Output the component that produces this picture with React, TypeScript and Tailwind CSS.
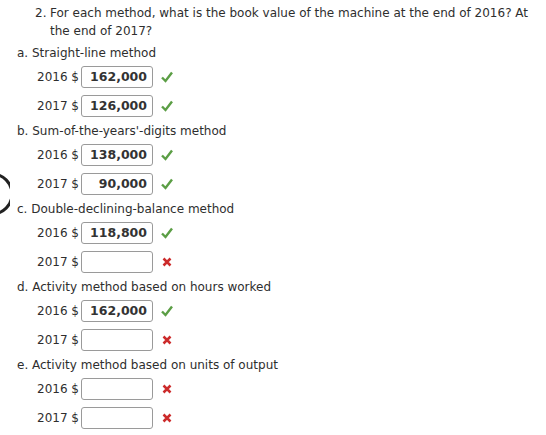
import React from 'react';

type Row = { year: string; value: string; ok: boolean };
type Part = { label: string; rows: Row[] };

const parts: Part[] = [
  { label: 'a. Straight-line method', rows: [{ year: '2016', value: '162,000', ok: true }, { year: '2017', value: '126,000', ok: true }] },
  { label: "b. Sum-of-the-years'-digits method", rows: [{ year: '2016', value: '138,000', ok: true }, { year: '2017', value: '90,000', ok: true }] },
  { label: 'c. Double-declining-balance method', rows: [{ year: '2016', value: '118,800', ok: true }, { year: '2017', value: '', ok: false }] },
  { label: 'd. Activity method based on hours worked', rows: [{ year: '2016', value: '162,000', ok: true }, { year: '2017', value: '', ok: false }] },
  { label: 'e. Activity method based on units of output', rows: [{ year: '2016', value: '', ok: false }, { year: '2017', value: '', ok: false }] },
];

function Check() {
  return (
    <svg width="12" height="12" viewBox="0 0 12 12" className="ml-[8px]">
      <path d="M1 6.5 L4.5 10 L11 1.5" fill="none" stroke="#5b9e45" strokeWidth="2.4" />
    </svg>
  );
}

function Cross() {
  return (
    <svg width="10" height="10" viewBox="0 0 10 10" className="ml-[9px]">
      <path d="M1.5 1.5 L8.5 8.5 M8.5 1.5 L1.5 8.5" fill="none" stroke="#cc2b2b" strokeWidth="2.5" />
    </svg>
  );
}

export default function App() {
  return (
    <div className="relative w-[546px] h-[435px] bg-white text-[#2e2e2e] text-[12px] leading-[18px] overflow-hidden" style={{ fontFamily: '"DejaVu Sans", Verdana, sans-serif' }}>
      <svg width="10" height="44" viewBox="0 0 10 44" className="absolute left-0 top-[172px]">
        <path d="M-8 2 A 20 20 0 0 1 -8 42" fill="none" stroke="#222" strokeWidth="3" />
      </svg>

      <div className="pt-[4px]">
        <div className="flex pl-[35px] w-[540px]">
          <span className="w-[15px] shrink-0">2.</span>
          <span>For each method, what is the book value of the machine at the end of 2016? At the end of 2017?</span>
        </div>

        <div className="mt-[4px]">
          {parts.map((p, i) => (
            <div key={i} className={i > 0 ? 'mt-[2px]' : ''}>
              <div className="pl-[17px] h-[18px]">{p.label}</div>
              {p.rows.map((r, j) => (
                <div key={j} className="h-[29px] flex items-center pl-[37px]">
                  <span>{r.year} $</span>
                  <div className="ml-[2px] w-[72px] h-[22px] border border-[#9a9a9a] rounded-[3px] flex items-center justify-end pr-[5px] font-bold text-[12.5px] text-[#333]">
                    {r.value}
                  </div>
                  {r.ok ? <Check /> : <Cross />}
                </div>
              ))}
            </div>
          ))}
        </div>
      </div>
    </div>
  );
}
